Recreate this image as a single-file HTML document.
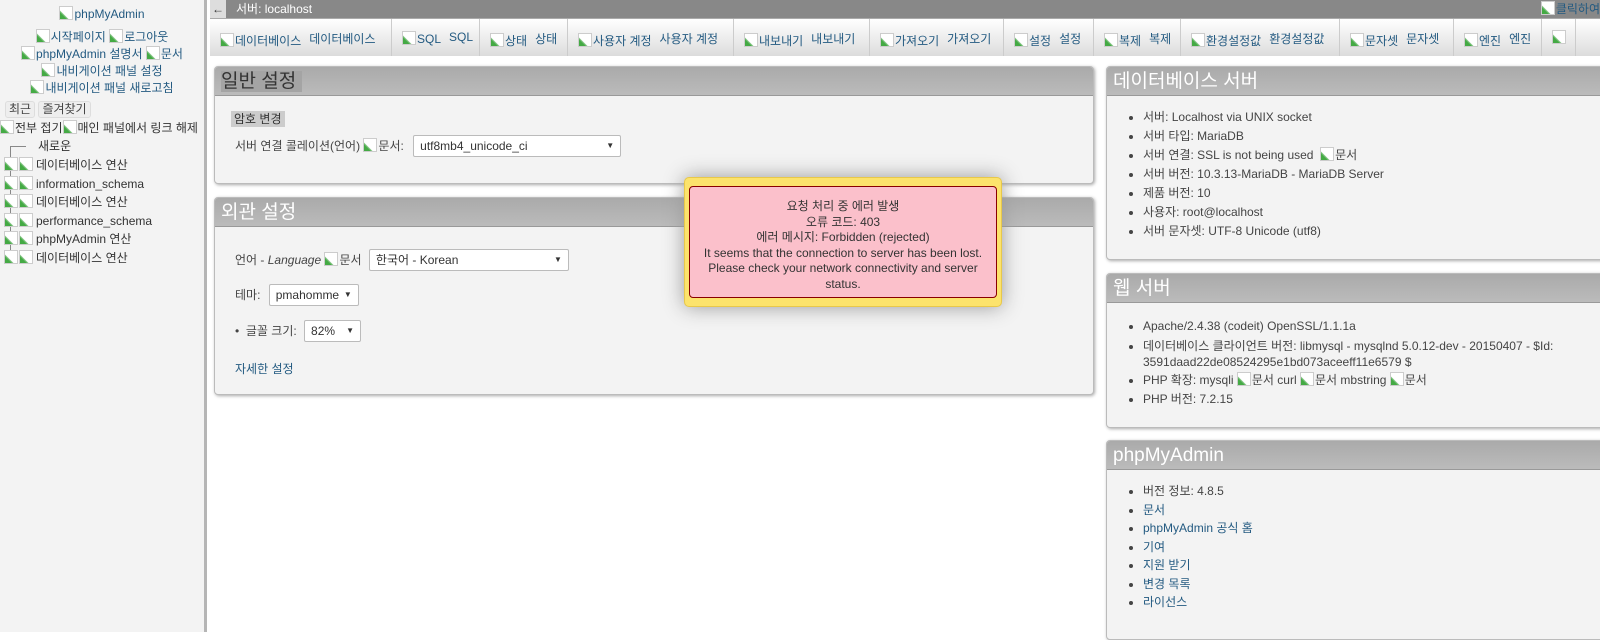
<!DOCTYPE html>
<html><head><meta charset="utf-8"><style>
*{box-sizing:border-box}
body{margin:0;width:1600px;height:632px;overflow:hidden;background:#fff;font-family:"Liberation Sans","Noto Sans CJK KR",sans-serif;font-size:12px;color:#444;position:relative}
.i{display:inline-block;width:14px;height:14px;vertical-align:-2px;border:1px solid #ccc;background:linear-gradient(45deg,#4a4 25%,#9c9 35%,#fff 36%);margin-right:1px}
a{color:#235a81;text-decoration:none}
#side{position:absolute;left:0;top:0;width:207px;height:632px;background:#f3f3f3;border-right:3px solid #b5b5b5}
#side .c{text-align:center;line-height:17px;color:#235a81}
.btn{display:inline-block;border:1px solid #ddd;border-radius:3px;padding:0 3px;background:#eee;line-height:15px;color:#444}
#top{position:absolute;left:210px;top:0;right:0;height:18px;background:#888;color:#fff;line-height:18px;font-size:12px}
#menu{position:absolute;left:210px;top:18px;right:0;height:38px;background:linear-gradient(#fff,#dcdcdc);border-top:1px solid #aaa;display:flex}
#menu div{border-right:1px solid #ccc;padding:11px 8px 0 10px;white-space:nowrap;color:#235a81;font-size:12px}
#menu div b{font-weight:normal;margin-left:8px;vertical-align:2px}
.p{position:absolute;background:#f3f3f3;border:1px solid #bbb;border-radius:4px;box-shadow:1px 1px 3px #aaa;overflow:hidden}
.p h2{margin:0;height:29px;background:linear-gradient(#aaa,#bbb);color:#fff;font-weight:normal;font-size:19px;line-height:29px;padding-left:6px;border-bottom:1px solid #999}
.p ul{margin:12px 0 0 0;padding-left:36px;line-height:19px}
.sel{display:inline-block;background:#fff;border:1px solid #bbb;border-radius:2px;height:22px;line-height:20px;padding:0 6px;color:#333;position:relative}
.sel:after{content:"▼";position:absolute;right:6px;font-size:8px;top:0}
</style></head><body>
<div id="side">
<div class="c" style="margin-top:6px"><span class="i"></span>phpMyAdmin</div>
<div class="c" style="margin-top:6px"><span class="i"></span>시작페이지 <span class="i"></span>로그아웃</div>
<div class="c"><span class="i"></span>phpMyAdmin 설명서 <span class="i"></span>문서</div>
<div class="c"><span class="i"></span>내비게이션 패널 설정</div>
<div class="c"><span class="i"></span>내비게이션 패널 새로고침</div>
<div style="margin:4px 0 0 5px"><span class="btn">최근</span> <span class="btn">즐겨찾기</span></div>
<div style="margin-top:1px;white-space:nowrap;color:#333"><span class="i"></span>전부 접기<span class="i"></span>매인 패널에서 링크 해제</div>
<div style="position:absolute;left:10px;top:146px;width:1px;height:112px;background:#888"></div>
<div style="position:absolute;left:10px;top:146px;width:16px;height:1px;background:#888"></div>
<div style="position:absolute;left:38px;top:137px;color:#333">새로운</div>
<div style="position:absolute;left:4px;top:156px;line-height:18.6px;color:#333;white-space:nowrap">
<div><span class="i"></span><span class="i"></span><span style="margin-left:2px">데이터베이스 연산</span></div>
<div><span class="i"></span><span class="i"></span><span style="margin-left:2px">information_schema</span></div>
<div><span class="i"></span><span class="i"></span><span style="margin-left:2px">데이터베이스 연산</span></div>
<div><span class="i"></span><span class="i"></span><span style="margin-left:2px">performance_schema</span></div>
<div><span class="i"></span><span class="i"></span><span style="margin-left:2px">phpMyAdmin 연산</span></div>
<div><span class="i"></span><span class="i"></span><span style="margin-left:2px">데이터베이스 연산</span></div>
</div>
</div>
<div id="top"><span style="display:inline-block;width:16px;background:#ddd;color:#333;text-align:center;margin-right:10px">←</span>서버: localhost<span style="position:absolute;right:0;color:#235a81"><span class="i"></span>클릭하여</span></div>
<div id="menu">
<div style="width:182px"><span class="i"></span>데이터베이스<b>데이터베이스</b></div>
<div style="width:88px"><span class="i"></span>SQL<b>SQL</b></div>
<div style="width:88px"><span class="i"></span>상태<b>상태</b></div>
<div style="width:166px"><span class="i"></span>사용자 계정<b>사용자 계정</b></div>
<div style="width:136px"><span class="i"></span>내보내기<b>내보내기</b></div>
<div style="width:134px"><span class="i"></span>가져오기<b>가져오기</b></div>
<div style="width:90px"><span class="i"></span>설정<b>설정</b></div>
<div style="width:87px"><span class="i"></span>복제<b>복제</b></div>
<div style="width:159px"><span class="i"></span>환경설정값<b>환경설정값</b></div>
<div style="width:114px"><span class="i"></span>문자셋<b>문자셋</b></div>
<div style="width:88px"><span class="i"></span>엔진<b>엔진</b></div>
<div><span class="i"></span></div>
</div>

<div class="p" style="left:214px;top:66px;width:880px;height:118px">
<h2><span style="background:#a4a4a4;color:#333;padding-right:6px">일반 설정</span></h2>
<div style="margin:14px 0 0 16px"><span style="background:#ccc;padding:1px 3px;color:#333">암호 변경</span></div>
<div style="margin:8px 0 0 20px">서버 연결 콜레이션(언어) <span class="i"></span>문서: <span class="sel" style="width:208px;margin-left:6px">utf8mb4_unicode_ci</span></div>
</div>

<div class="p" style="left:214px;top:197px;width:880px;height:198px">
<h2>외관 설정</h2>
<div style="margin:22px 0 0 20px">언어 - <i>Language</i> <span class="i"></span>문서 <span class="sel" style="width:200px;margin-left:4px">한국어 - Korean</span></div>
<div style="margin:13px 0 0 20px">테마: <span class="sel" style="width:90px;margin-left:5px">pmahomme</span></div>
<div style="margin:14px 0 0 20px">• &nbsp;글꼴 크기: <span class="sel" style="width:57px;margin-left:4px">82%</span></div>
<div style="margin:18px 0 0 20px;color:#235a81">자세한 설정</div>
</div>

<div class="p" style="left:1106px;top:66px;width:500px;height:194px">
<h2>데이터베이스 서버</h2>
<ul><li>서버: Localhost via UNIX socket</li><li>서버 타입: MariaDB</li><li>서버 연결: SSL is not being used &nbsp;<span class="i"></span>문서</li><li>서버 버전: 10.3.13-MariaDB - MariaDB Server</li><li>제품 버전: 10</li><li>사용자: root@localhost</li><li>서버 문자셋: UTF-8 Unicode (utf8)</li></ul>
</div>
<div class="p" style="left:1106px;top:273px;width:500px;height:155px">
<h2>웹 서버</h2>
<ul style="margin-top:14px"><li>Apache/2.4.38 (codeit) OpenSSL/1.1.1a</li><li style="line-height:16px;margin-top:2px">데이터베이스 클라이언트 버전: libmysql - mysqlnd 5.0.12-dev - 20150407 - $Id: 3591daad22de08524295e1bd073aceeff11e6579 $</li><li style="margin-top:1px"><span>PHP 확장: mysqli <span class="i"></span>문서 curl <span class="i"></span>문서 mbstring <span class="i"></span>문서</span></li><li>PHP 버전: 7.2.15</li></ul>
</div>
<div class="p" style="left:1106px;top:440px;width:500px;height:200px">
<h2>phpMyAdmin</h2>
<ul style="margin-top:12px;line-height:18.5px"><li>버전 정보: 4.8.5</li><li><a>문서</a></li><li><a>phpMyAdmin 공식 홈</a></li><li><a>기여</a></li><li><a>지원 받기</a></li><li><a>변경 목록</a></li><li><a>라이선스</a></li></ul>
</div>

<div style="position:absolute;left:684px;top:177px;width:318px;height:130px;background:#fce36c;border:1px solid #e8c84a;border-radius:5px;box-shadow:0 0 20px #999">
<div style="position:absolute;left:4px;top:8px;width:308px;height:112px;background:#fbc0cb;border:1px solid #800;border-radius:4px;text-align:center;color:#333;line-height:15.5px;padding-top:12px">요청 처리 중 에러 발생<br>오류 코드: 403<br>에러 메시지: Forbidden (rejected)<br>It seems that the connection to server has been lost. Please check your network connectivity and server status.</div>
</div>
</body></html>
